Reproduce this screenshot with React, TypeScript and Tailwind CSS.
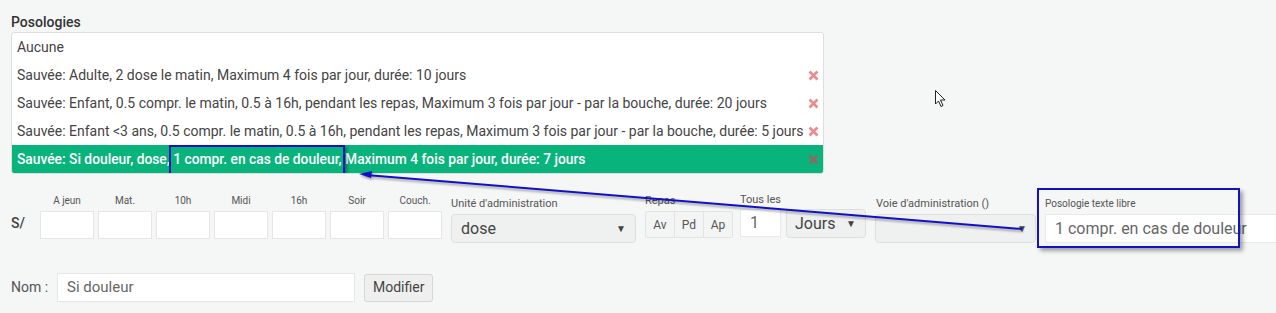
import React from 'react';

const rows = [
  { text: 'Aucune', saved: false },
  { text: 'Sauvée: Adulte, 2 dose le matin, Maximum 4 fois par jour, durée: 10 jours', saved: true },
  { text: 'Sauvée: Enfant, 0.5 compr. le matin, 0.5 à 16h, pendant les repas, Maximum 3 fois par jour - par la bouche, durée: 20 jours', saved: true },
  { text: 'Sauvée: Enfant <3 ans, 0.5 compr. le matin, 0.5 à 16h, pendant les repas, Maximum 3 fois par jour - par la bouche, durée: 5 jours', saved: true },
];

const moments = ['A jeun', 'Mat.', '10h', 'Midi', '16h', 'Soir', 'Couch.'];

function Cross({ color }: { color: string }) {
  return (
    <svg width="11" height="11" viewBox="0 0 11 11" className="shrink-0">
      <path d="M1.5 1.5 L9.5 9.5 M9.5 1.5 L1.5 9.5" stroke={color} strokeWidth="2.6" strokeLinecap="butt" />
    </svg>
  );
}

function Caret() {
  return <span className="text-[10px] text-[#444] leading-none">▼</span>;
}

export default function App() {
  return (
    <div
      className="relative w-[1276px] h-[313px] overflow-hidden bg-[#f5f6f6] text-[#444]"
      style={{ fontFamily: 'Roboto, "Liberation Sans", sans-serif' }}
    >
      <div className="pl-[11px] pt-[12px]">
        <div className="text-[14px] font-medium text-[#333] leading-[20px] h-[20px]">Posologies</div>

        {/* liste des posologies */}
        <div className="w-[813px] bg-white border border-[#dedede] rounded-[3px] overflow-hidden">
          {rows.map((r, i) => (
            <div key={i} className="h-[28px] flex items-center justify-between pl-[5px] pr-[4px] text-[14px] text-[#444]">
              <span>{r.text}</span>
              {r.saved && <Cross color="#ea8a8f" />}
            </div>
          ))}
          <div className="h-[28px] flex items-center justify-between pl-[5px] pr-[4px] text-[13.8px] font-medium text-white bg-[#08b37c]">
            <span>
              Sauvée: Si douleur, dose,{' '}
              <span className="relative">
                1 compr. en cas de douleur,
                <span className="absolute left-[-4px] right-[-3px] top-[-6px] bottom-[-10px] border-2 border-[#1212c4] shadow-[2px_2px_3px_rgba(0,0,0,0.35)]" />
              </span>{' '}
              Maximum 4 fois par jour, durée: 7 jours
            </span>
            <Cross color="#8e6a5c" />
          </div>
        </div>

        {/* ligne de saisie */}
        <div className="flex items-start mt-[21px]">
          <div className="w-[29px] shrink-0 mt-[18px] text-[14px] font-medium text-[#444] leading-[20px]">S/</div>
          <div className="flex gap-[4px] shrink-0">
            {moments.map((m) => (
              <div key={m} className="w-[54px] flex flex-col items-center">
                <div className="text-[10px] leading-[12px] text-[#555] h-[12px]">{m}</div>
                <div className="mt-[4px] w-[54px] h-[28px] bg-white border border-[#e6e6e6]" />
              </div>
            ))}
          </div>

          <div className="ml-[9px] w-[185px] shrink-0">
            <div className="text-[11px] leading-[14px] text-[#555] mt-[2px]">Unité d'administration</div>
            <div className="mt-[3px] h-[29px] rounded-[4px] bg-[#eff0f0] border border-[#dedede] flex items-center justify-between pl-[9px] pr-[9px]">
              <span className="text-[16px] text-[#444]">dose</span>
              <Caret />
            </div>
          </div>

          <div className="ml-[9px] shrink-0">
            <div className="text-[11px] leading-[12px] text-[#555]">Repas</div>
            <div className="mt-[4px] flex h-[27px] border border-[#e3e3e3] rounded-[2px] bg-[#f3f4f4] text-[12px] text-[#555]">
              <div className="w-[29px] flex items-center justify-center border-r border-[#e3e3e3]">Av</div>
              <div className="w-[29px] flex items-center justify-center border-r border-[#e3e3e3]">Pd</div>
              <div className="w-[28px] flex items-center justify-center">Ap</div>
            </div>
          </div>

          <div className="ml-[7px] shrink-0">
            <div className="text-[11px] leading-[12px] text-[#555] -mt-[1px]">Tous les</div>
            <div className="mt-[3px] flex gap-[5px]">
              <div className="w-[41px] h-[28px] bg-white border border-[#e9e9e9] flex items-center pl-[9px] text-[16px] text-[#666]">1</div>
              <div className="w-[80px] h-[29px] rounded-[4px] bg-[#eff0f0] border border-[#dedede] flex items-center justify-between pl-[8px] pr-[9px]">
                <span className="text-[16px] text-[#444]">Jours</span>
                <Caret />
              </div>
            </div>
          </div>

          <div className="ml-[9px] w-[161px] shrink-0">
            <div className="text-[11px] leading-[14px] text-[#555] mt-[2px] pl-[1px]">Voie d'administration ()</div>
            <div className="mt-[3px] h-[29px] rounded-[4px] bg-[#eff0f0] border border-[#dedede] flex items-center justify-end pr-[8px]">
              <Caret />
            </div>
          </div>

          <div className="ml-[9px] w-[260px] shrink-0">
            <div className="text-[10px] leading-[14px] text-[#555] mt-[2px]">Posologie texte libre</div>
            <div className="mt-[3px] h-[29px] bg-white border border-[#e9e9e9] flex items-center pl-[9px] text-[16px] text-[#666]">
              1 compr. en cas de douleur
            </div>
          </div>
        </div>

        {/* nom */}
        <div className="flex items-center mt-[30px]">
          <span className="text-[14px] text-[#555] w-[46px]">Nom :</span>
          <div className="w-[298px] h-[29px] bg-white border border-[#e6e6e6] flex items-center pl-[9px] text-[15px] text-[#666]">
            Si douleur
          </div>
          <button className="ml-[9px] h-[28px] px-[8px] bg-[#efefef] border border-[#d6d6d6] rounded-[3px] text-[14px] text-[#444]">
            Modifier
          </button>
        </div>
      </div>

      {/* annotation : cadre autour du texte libre */}
      <div className="absolute left-[1037px] top-[188px] w-[203px] h-[60px] border-2 border-[#1212c4] shadow-[3px_3px_4px_rgba(0,0,0,0.35)]" />

      {/* annotation : flèche */}
      <svg className="absolute left-0 top-0 pointer-events-none" width="1276" height="313" viewBox="0 0 1276 313">
        <g style={{ filter: 'drop-shadow(1px 2px 1px rgba(0,0,0,0.35))' }}>
          <line x1="1022" y1="229" x2="366" y2="175" stroke="#1010c8" strokeWidth="2" />
          <path d="M359 174 L372 171 L371 178 Z" fill="#1010c8" />
        </g>
        {/* curseur */}
        <path d="M935.5 90.5 L935.5 104 L938.5 101 L941 106.5 L943 105.5 L940.5 100 L945 100 Z" fill="#fff" stroke="#222" strokeWidth="1" />
      </svg>
    </div>
  );
}
